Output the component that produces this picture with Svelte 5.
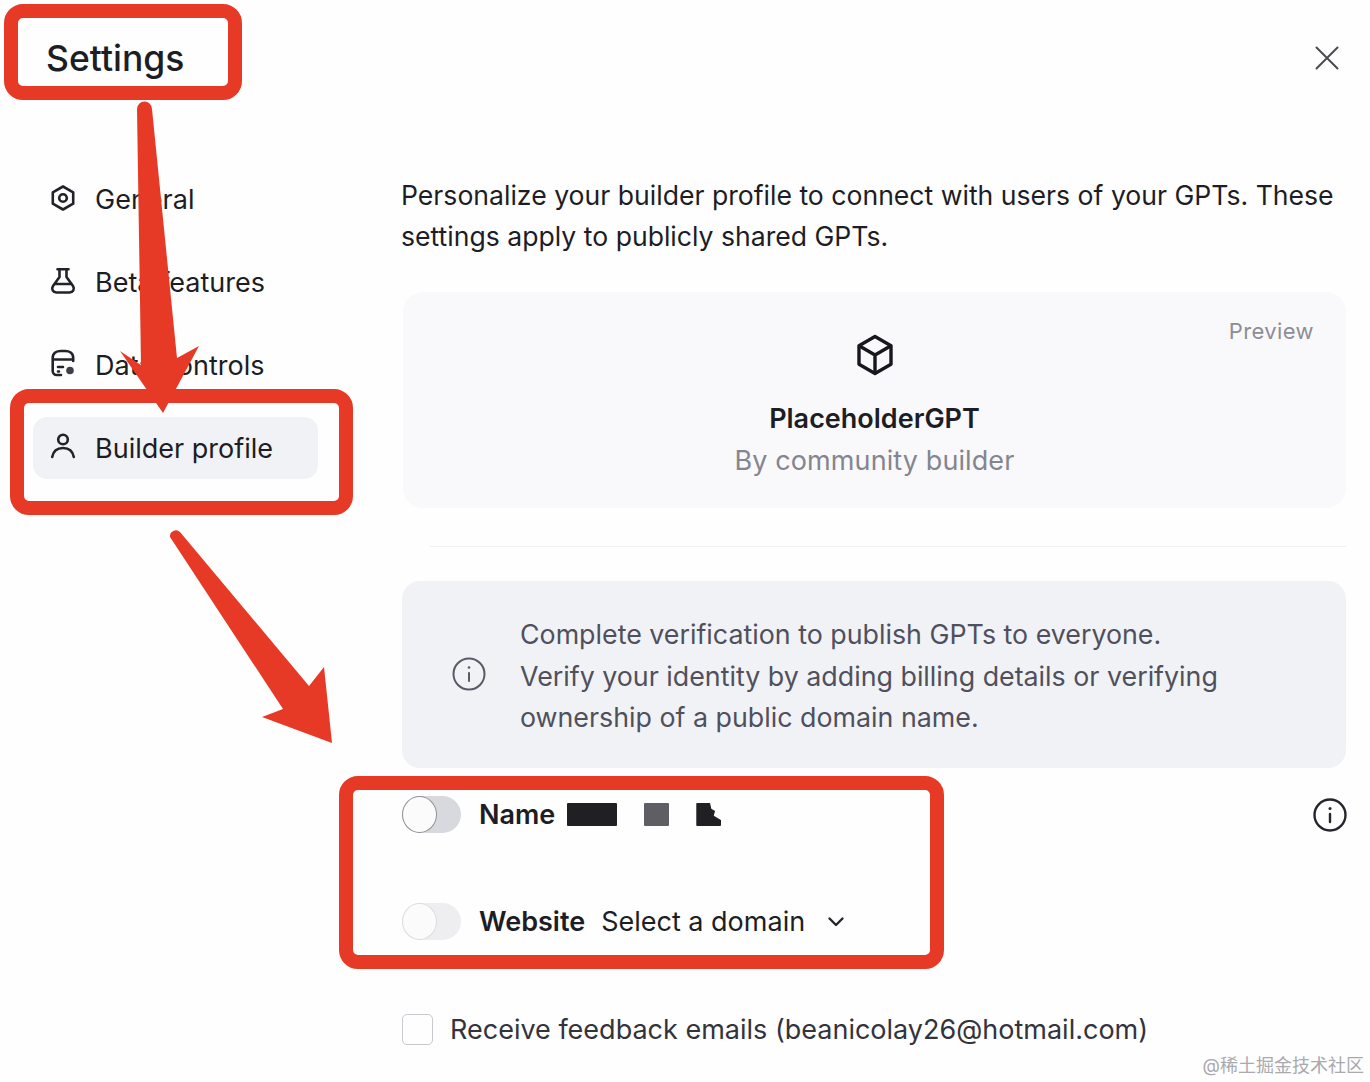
<script>
  const navItems = [
    { label: 'General', icon: 'gear' },
    { label: 'Beta features', icon: 'flask' },
    { label: 'Data controls', icon: 'data' },
    { label: 'Builder profile', icon: 'user', active: true }
  ]
</script>

<svelte:head><title>Settings</title></svelte:head>

<div class="page">
  <header class="top">
    <h1>Settings</h1>
    <button class="close" aria-label="Close">
      <svg width="26" height="26" viewBox="0 0 26 26" fill="none" stroke="#4a4a52" stroke-width="2" stroke-linecap="round"><path d="M2.500 2.500l21 21M23.500 2.500l-21 21" /></svg>
    </button>
  </header>

  <div class="body">
    <nav class="side">
      {#each navItems as item}
        <div class="nav-item" class:active={item.active}>
          <svg class="nav-icon" width="28" height="28" viewBox="0 0 28 28" fill="none" stroke="#22222a" stroke-width="2.600" stroke-linecap="round" stroke-linejoin="round">
            {#if item.icon === 'gear'}
              <path d="M14 1.500l10.200 5.800v11.400L14 24.500 3.800 18.700V7.300z" />
              <circle cx="14" cy="13" r="3.800" />
            {:else if item.icon === 'flask'}
              <path d="M8.500 1.200h11M10.500 1.200V9L4 18c-2 3 0 6.500 3.500 6.500h13c3.500 0 5.500-3.500 3.500-6.500L17.500 9V1.200M6.500 16h15" />
            {:else if item.icon === 'data'}
              <path d="M3.700 7V20a4 4 0 0 0 4 4H12M3.700 7c0-5 4-7 8-7h4.500c4 0 8 2 8 7v3M3.700 8.500h20.600M9 16h5M9 20.500h1" />
              <circle cx="21" cy="19.500" r="3.800" fill="#3f3f4a" stroke="none" />
            {:else}
              <circle cx="14" cy="5.500" r="4.800" />
              <path d="M3.200 23c1-5.500 5-9 10.800-9s9.800 3.500 10.800 9" />
            {/if}
          </svg>
          <span>{item.label}</span>
        </div>
      {/each}
    </nav>

    <main class="content">
      <p class="intro">Personalize your builder profile to connect with users of your GPTs. These<br />settings apply to publicly shared GPTs.</p>

      <section class="preview">
        <span class="preview-tag">Preview</span>
        <svg width="40" height="42" viewBox="0 0 40 42" fill="none" stroke="#17171d" stroke-width="3.400" stroke-linejoin="round"><path d="M20 2.500l16 9.200v18.600L20 39.500 4 30.300V11.700z" /><path d="M4.500 12L20 21l15.500-9M20 21v18" /></svg>
        <strong>PlaceholderGPT</strong>
        <span class="byline">By community builder</span>
      </section>

      <hr class="rule" />

      <section class="notice">
        <svg width="34" height="34" viewBox="0 0 34 34" fill="none" stroke="#5a5a66" stroke-width="2" stroke-linecap="round"><circle cx="17" cy="17" r="15.500" /><path d="M17 16v8" /><circle cx="17" cy="10.500" r="1.300" fill="#5a5a66" stroke="none" /></svg>
        <p>Complete verification to publish GPTs to everyone.<br />Verify your identity by adding billing details or verifying<br />ownership of a public domain name.</p>
      </section>

      <div class="field name-row">
        <span class="toggle"><i></i></span>
        <b>Name</b>
        <span class="redacted">
          <em class="r1"></em>
          <em class="r2"></em>
          <em class="r3"></em>
        </span>
        <svg class="row-info" width="34" height="34" viewBox="0 0 34 34" fill="none" stroke="#25252d" stroke-width="2.400" stroke-linecap="round"><circle cx="17" cy="17" r="15.500" /><path d="M17 16v8" /><circle cx="17" cy="10.500" r="1.500" fill="#25252d" stroke="none" /></svg>
      </div>

      <div class="field site-row">
        <span class="toggle pale"><i></i></span>
        <b>Website</b>
        <span class="domain">Select a domain</span>
        <svg class="chev" width="18" height="12" viewBox="0 0 18 12" fill="none" stroke="#25252d" stroke-width="2.400" stroke-linecap="round" stroke-linejoin="round"><path d="M2.500 2.500L9 9l6.500-6.500" /></svg>
      </div>

      <label class="feedback">
        <span class="check"></span>
        <span>Receive feedback emails (beanicolay26@hotmail.com)</span>
      </label>
    </main>
  </div>

  <span class="watermark">@稀土掘金技术社区</span>

  <!-- red annotations drawn over the screenshot -->
  <svg class="marks" width="1370" height="1082" viewBox="0 0 1370 1082" fill="none">
    <g stroke="#e63a27" stroke-width="14">
      <rect x="11" y="11" width="224" height="82" rx="12" />
      <rect x="17" y="396" width="329" height="112" rx="12" />
      <rect x="346" y="783" width="591" height="179" rx="12" />
    </g>
    <path fill="#e63a27" d="M137 109a7.500 7.500 0 0 1 15 0L177 358L199 346L163 413L120 351L141 365Z" />
    <path fill="#e63a27" d="M170 537a6 6 0 0 1 10-5L309 686L324 667L332 743L262 717L283 709Z" />
  </svg>
</div>

<style>
  :global(body) { background: #fefefe; }
  .page { position: relative; width: 1370px; height: 1082px; overflow: hidden; background: #fefefe; color: #1d1d25; font-family: Inter, "Noto Sans CJK SC", sans-serif; }
  .top { display: flex; justify-content: space-between; align-items: center; height: 116px; padding: 0 30px 0 46px; box-sizing: border-box; }
  h1 { margin: 0; font-size: 35.500px; font-weight: 500; }
  .close { display: flex; padding: 0; background: none; border: none; }
  .body { display: grid; grid-template-columns: 401px 945px; }
  .side { display: flex; flex-direction: column; gap: 21px; padding: 52px 83px 0 33px; }
  .nav-item { display: flex; align-items: center; gap: 18px; height: 62px; padding-left: 16px; border-radius: 14px; font-size: 27px; }
  .nav-item.active { background: #f1f2f6; }
  .nav-icon { flex: none; overflow: visible; }
  .content { padding-top: 59px; }
  .intro { margin: 0 0 35px; font-size: 26.600px; line-height: 41px; white-space: nowrap; }
  .preview { position: relative; display: flex; flex-direction: column; align-items: center; height: 216px; margin-left: 2px; padding-top: 42px; box-sizing: border-box; border-radius: 20px; background: #f9f9fb; }
  .preview strong { margin-top: 24px; font-size: 27px; font-weight: 600; line-height: 38px; }
  .byline { margin-top: 4px; font-size: 27px; line-height: 38px; letter-spacing: 0.1px; color: #85858f; }
  .preview-tag { position: absolute; top: 26px; right: 32px; font-size: 22px; letter-spacing: 0.4px; color: #8d8d96; }
  .rule { height: 1px; margin: 38px 0 34px 29px; border: none; background: #f1f1f4; }
  .notice { display: flex; align-items: center; gap: 34px; height: 187px; margin-left: 1px; padding-left: 50px; box-sizing: border-box; border-radius: 18px; background: #f1f2f6; color: #50505c; }
  .notice svg { flex: none; margin-top: -2px; }
  .notice p { margin: 4px 0 0; font-size: 26.800px; line-height: 41.500px; white-space: nowrap; }
  .field { display: flex; align-items: center; height: 37px; margin-left: 1px; font-size: 27px; }
  .field b { font-weight: 600; }
  .name-row { margin-top: 28px; }
  .site-row { margin-top: 70px; }
  .toggle { display: flex; flex: none; width: 59px; height: 37px; margin-right: 18px; border-radius: 19px; background: #d8d9de; }
  .toggle i { width: 33px; height: 35px; border: 1px solid #8f9096; border-radius: 50%; background: #fbfbfc; }
  .toggle.pale { background: #eeeef1; }
  .toggle.pale i { border-color: #dcdce0; }
  .redacted { display: flex; margin-left: 12px; }
  .redacted em { display: block; height: 23px; border-radius: 1px; background: #1f1f24; }
  .r1 { width: 50px; }
  .redacted .r2 { width: 25px; margin-left: 27px; background: #5e5e64; }
  .redacted .r3 { width: 25px; margin-left: 27px; clip-path: polygon(0 0, 55% 0, 60% 25%, 75% 35%, 70% 55%, 100% 75%, 100% 100%, 0 100%); }
  .row-info { margin-left: auto; margin-right: -1px; }
  .domain { margin-left: 16px; }
  .chev { margin-left: 22px; }
  .feedback { display: flex; align-items: center; gap: 17px; margin-top: 73px; margin-left: 1px; font-size: 27px; color: #33333c; }
  .check { flex: none; width: 29px; height: 29px; border: 1.500px solid #c9c9cf; border-radius: 5px; }
  .watermark { position: absolute; right: 6px; bottom: 5px; font-size: 18px; color: #a9a9ae; }
  .marks { position: absolute; top: 0; left: 0; pointer-events: none; }
</style>
